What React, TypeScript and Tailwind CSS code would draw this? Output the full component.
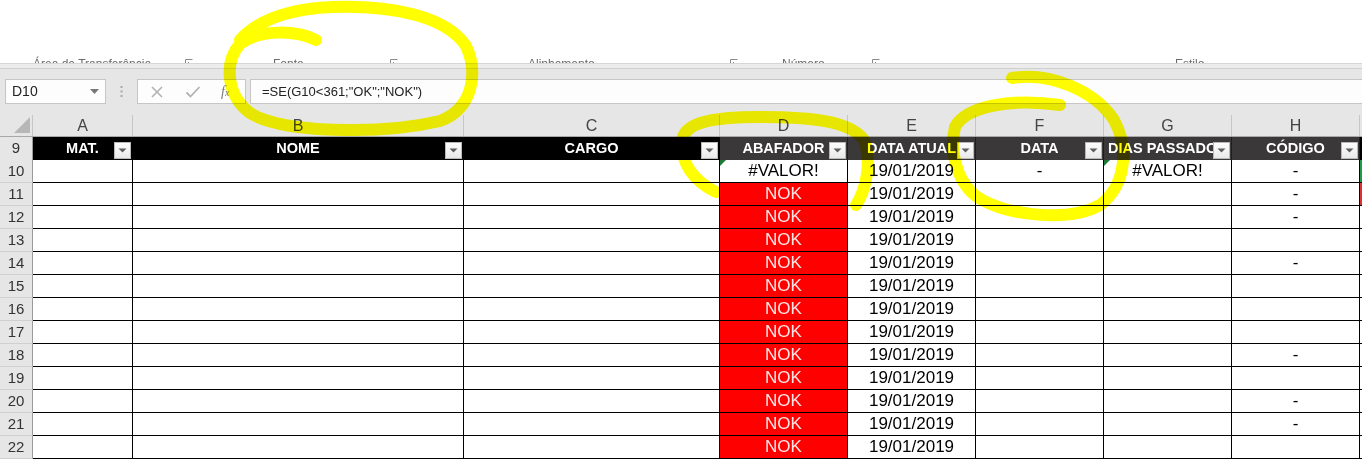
import React from 'react';

const cols = [
  { key: 'A', w: 'w-[100px]' },
  { key: 'B', w: 'w-[331px]' },
  { key: 'C', w: 'w-[256px]' },
  { key: 'D', w: 'w-[128px]' },
  { key: 'E', w: 'w-[128px]' },
  { key: 'F', w: 'w-[128px]' },
  { key: 'G', w: 'w-[128px]' },
  { key: 'H', w: 'w-[128px]' },
];

const headers = ['MAT.', 'NOME', 'CARGO', 'ABAFADOR', 'DATA ATUAL', 'DATA', 'DIAS PASSADOS', 'CÓDIGO'];

// linhas 10..22
const rows = Array.from({ length: 13 }, (_, i) => i + 10);
const dashRows = [10, 11, 12, 14, 18, 20, 21];

function Launcher() {
  return (
    <svg width="8" height="8" viewBox="0 0 8 8" className="mt-[2px]">
      <path d="M0.5 7.5V0.5H7.5" fill="none" stroke="#8a8a8a" />
      <path d="M3 3L7 7M7 4V7H4" fill="none" stroke="#8a8a8a" />
    </svg>
  );
}

function FilterButton() {
  return (
    <div className="absolute right-[1px] bottom-[1px] w-[17px] h-[17px] border border-[#b9b9b9] bg-gradient-to-b from-[#fdfdfd] to-[#e9e9e9] flex items-center justify-center">
      <svg width="9" height="5" viewBox="0 0 9 5">
        <path d="M0.5 0.5H8.5L4.5 4.5Z" fill="#5f5f5f" />
      </svg>
    </div>
  );
}

function ErrorMark() {
  return (
    <svg width="6" height="6" viewBox="0 0 6 6" className="absolute left-0 top-0">
      <path d="M0 0H6L0 6Z" fill="#1f7a3a" />
    </svg>
  );
}

function cellContent(col: string, r: number) {
  if (col === 'D') return r === 10 ? '#VALOR!' : 'NOK';
  if (col === 'E') return '19/01/2019';
  if (col === 'F' && r === 10) return '-';
  if (col === 'G' && r === 10) return '#VALOR!';
  if (col === 'H' && dashRows.includes(r)) return '-';
  return '';
}

export default function App() {
  return (
    <div className="relative w-[1362px] h-[460px] overflow-hidden bg-white font-['Liberation_Sans',Arial,sans-serif] text-black">
      {/* faixa da ribbon (rótulos cortados) */}
      <div className="h-[63px] flex items-start pt-[57px] overflow-hidden text-[12px] leading-[14px] text-[#6b6b6b] whitespace-nowrap">
        <div className="w-[33px]" />
        <div className="w-[152px]">Área de Transferência</div>
        <div className="w-[88px]"><Launcher /></div>
        <div className="w-[117px]">Fonte</div>
        <div className="w-[138px]"><Launcher /></div>
        <div className="w-[202px]">Alinhamento</div>
        <div className="w-[52px]"><Launcher /></div>
        <div className="w-[90px]">Número</div>
        <div className="w-[303px]"><Launcher /></div>
        <div>Estilo</div>
      </div>

      <div className="bg-[#e6e6e6]">
        <div className="h-[5px] border-t border-[#d6d6d6] bg-[#ececec]" />
        <div className="h-[11px] border-t border-[#cfcfcf]" />

        {/* barra de fórmulas */}
        <div className="h-[25px] flex items-stretch text-[14px]">
          <div className="ml-[5px] w-[101px] bg-[#fdfdfd] border border-[#c6c6c6] flex items-center justify-between pl-[6px] pr-[6px]">
            <span className="text-[#222]">D10</span>
            <svg width="9" height="5" viewBox="0 0 9 5">
              <path d="M0 0H9L4.5 5Z" fill="#777" />
            </svg>
          </div>
          <div className="w-[31px] flex items-center justify-center">
            <svg width="3" height="11" viewBox="0 0 3 11">
              <rect x="0.5" y="0" width="2" height="2" fill="#a8a8a8" />
              <rect x="0.5" y="4.5" width="2" height="2" fill="#a8a8a8" />
              <rect x="0.5" y="9" width="2" height="2" fill="#a8a8a8" />
            </svg>
          </div>
          <div className="w-[109px] bg-[#fdfdfd] border border-[#c6c6c6] flex items-center">
            <svg width="14" height="14" viewBox="0 0 14 14" className="ml-[12px]">
              <path d="M2 2L12 12M12 2L2 12" stroke="#b3b3b3" strokeWidth="1.6" />
            </svg>
            <svg width="16" height="14" viewBox="0 0 16 14" className="ml-[21px]">
              <path d="M1.5 7.5L5.5 11.5L14.5 2" fill="none" stroke="#b3b3b3" strokeWidth="1.8" />
            </svg>
            <span className="ml-[20px] font-['Liberation_Serif',serif] italic text-[14px] text-[#7a7a7a]">
              f<span className="text-[10px]">x</span>
            </span>
          </div>
          <div className="ml-[4px] flex-1 bg-[#fdfdfd] border border-[#c6c6c6] border-r-0 flex items-center pl-[11px] text-[13px] text-[#222]">
            =SE(G10&lt;361;"OK";"NOK")
          </div>
        </div>

        <div className="h-[11px]" />

        {/* cabeçalho de colunas */}
        <div className="h-[22px] flex border-b border-[#a8a8a8] text-[16px] text-[#444]">
          <div className="w-[33px] border-r border-[#c6c6c6] flex items-end justify-end pr-[2px] pb-[3px]">
            <svg width="16" height="16" viewBox="0 0 16 16">
              <path d="M16 0V16H0Z" fill="#b7b7b7" />
            </svg>
          </div>
          {cols.map((c) => (
            <div key={c.key} className={`${c.w} border-r border-[#c6c6c6] flex items-center justify-center`}>
              {c.key}
            </div>
          ))}
          <div className="flex-1" />
        </div>
      </div>

      {/* linha 9: cabeçalho da tabela */}
      <div className="h-[23px] flex text-[14.5px] font-bold text-white">
        <div className="w-[33px] bg-[#e6e6e6] border-r border-[#9b9b9b] flex items-center justify-center text-[15px] font-normal text-[#333]">
          9
        </div>
        {cols.map((c, i) => (
          <div
            key={c.key}
            className={`${c.w} relative overflow-hidden whitespace-nowrap flex items-center justify-center pt-[1px] border-r ${
              i < 3 ? 'bg-black border-black' : 'bg-[#3a3838] border-[#1f1f1f]'
            }`}
          >
            {headers[i]}
            <FilterButton />
          </div>
        ))}
        <div className="flex-1 bg-black" />
      </div>

      {/* dados */}
      {rows.map((r) => (
        <div key={r} className="h-[23px] flex text-[17px]">
          <div className="w-[33px] bg-[#e6e6e6] border-r border-[#9b9b9b] border-b border-b-[#d0d0d0] flex items-center justify-center text-[15px] text-[#333]">
            {r}
          </div>
          {cols.map((c) => {
            const red = c.key === 'D' && r > 10;
            const err = r === 10 && (c.key === 'D' || c.key === 'G');
            return (
              <div
                key={c.key}
                className={`${c.w} relative flex items-center justify-center border-r border-b border-black ${
                  red ? 'bg-[#ff0000] text-[#ffe6e6]' : 'bg-white'
                }`}
              >
                {err && <ErrorMark />}
                {cellContent(c.key, r)}
              </div>
            );
          })}
          <div
            className={`flex-1 border-b border-black ${
              r === 10 ? 'bg-[#1f9a45]' : r === 11 ? 'bg-[#e03030]' : 'bg-white'
            }`}
          />
        </div>
      ))}

      {/* marcas de marca-texto amarelo */}
      <svg
        className="absolute inset-0 pointer-events-none mix-blend-multiply"
        width="1362"
        height="460"
        viewBox="0 0 1362 460"
      >
        <g fill="none" stroke="#ffff00" strokeWidth="12" strokeLinecap="round" strokeLinejoin="round">
          <path d="M316 40 C298 31 262 28 240 44 C224 62 226 95 250 113 C282 133 380 135 440 121 C474 108 478 72 466 46 C446 16 392 5 332 7 C288 9 258 20 240 40" />
          <path d="M716 192 C692 180 681 162 682 141 C684 123 710 117 760 117 C812 117 850 121 864 140 C872 162 866 190 856 205" />
          <path d="M1012 78 C1050 72 1094 90 1114 120 C1130 150 1125 186 1100 205 C1070 222 1012 216 982 200 C957 186 949 152 955 127 C966 106 1012 98 1060 105" />
        </g>
      </svg>
    </div>
  );
}
